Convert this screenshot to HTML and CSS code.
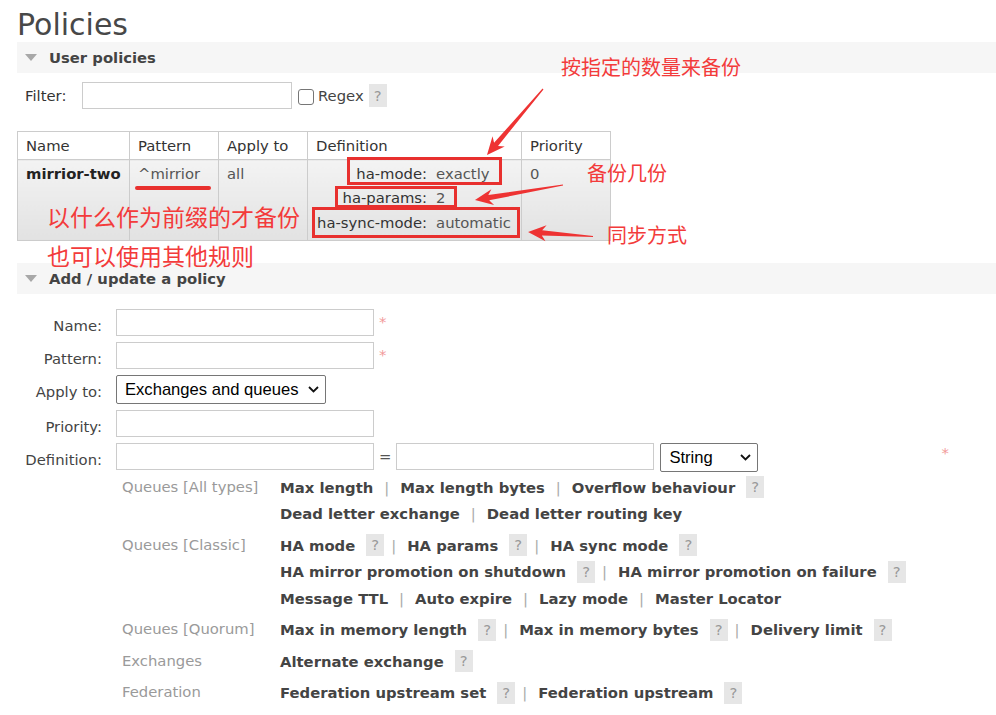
FILE: index.html
```html
<!DOCTYPE html>
<html lang="zh-CN">
<head>
<meta charset="utf-8">
<title>Policies</title>
<link rel="stylesheet" href="styles.css">
</head>
<body>
<div class="page">
  <h1>Policies</h1>

  <section class="section">
    <h2 class="bar"><span class="tri"></span>User policies</h2>
    <div class="filter">
      <span class="filter-label">Filter:</span>
      <input class="text filter-input" type="text">
      <span class="check"></span>
      <span class="regex">Regex</span>
      <span class="help">?</span>
    </div>

    <table class="list">
      <colgroup>
        <col class="c-name"><col class="c-pat"><col class="c-apply"><col class="c-def"><col class="c-pri">
      </colgroup>
      <thead>
        <tr><th>Name</th><th>Pattern</th><th>Apply to</th><th>Definition</th><th>Priority</th></tr>
      </thead>
      <tbody>
        <tr>
          <td class="pname">mirrior-two</td>
          <td>^mirrior</td>
          <td>all</td>
          <td class="def">
            <table class="kv">
              <tr><th>ha-mode:</th><td>exactly</td></tr>
              <tr><th>ha-params:</th><td>2</td></tr>
              <tr class="last"><th>ha-sync-mode:</th><td>automatic</td></tr>
            </table>
          </td>
          <td>0</td>
        </tr>
      </tbody>
    </table>
  </section>

  <section class="section add">
    <h2 class="bar"><span class="tri"></span>Add / update a policy</h2>
    <form class="form">
      <div class="row first">
        <label class="lbl">Name:</label>
        <div class="field"><input class="text w258" type="text"><span class="req">*</span></div>
      </div>
      <div class="row">
        <label class="lbl">Pattern:</label>
        <div class="field"><input class="text w258" type="text"><span class="req">*</span></div>
      </div>
      <div class="row">
        <label class="lbl">Apply to:</label>
        <div class="field">
          <span class="sel sel-apply">
            <select><option>Exchanges and queues</option></select>
            <svg class="chev" width="11" height="7" viewBox="0 0 11 7"><path d="M1 1l4.5 4.5L10 1" fill="none" stroke="#111" stroke-width="1.8"/></svg>
          </span>
        </div>
      </div>
      <div class="row">
        <label class="lbl">Priority:</label>
        <div class="field"><input class="text w258" type="text"></div>
      </div>
      <div class="row">
        <label class="lbl">Definition:</label>
        <div class="field def-field">
          <input class="text w258" type="text">
          <span class="eq">=</span>
          <input class="text w258" type="text">
          <span class="sel sel-type">
            <select><option>String</option></select>
            <svg class="chev" width="11" height="7" viewBox="0 0 11 7"><path d="M1 1l4.5 4.5L10 1" fill="none" stroke="#111" stroke-width="1.8"/></svg>
          </span>
          <span class="req req-def">*</span>
        </div>
      </div>

      <div class="help-area">
        <div class="group">
          <div class="cat">Queues [All types]</div>
          <div class="links">
            <div class="line"><span>Max length</span><span class="sep">|</span><span>Max length bytes</span><span class="sep">|</span><span>Overflow behaviour</span><span class="help">?</span></div>
            <div class="line"><span>Dead letter exchange</span><span class="sep">|</span><span>Dead letter routing key</span></div>
          </div>
        </div>
        <div class="group">
          <div class="cat">Queues [Classic]</div>
          <div class="links">
            <div class="line"><span>HA mode</span><span class="help">?</span><span class="sep">|</span><span>HA params</span><span class="help">?</span><span class="sep">|</span><span>HA sync mode</span><span class="help">?</span></div>
            <div class="line"><span>HA mirror promotion on shutdown</span><span class="help">?</span><span class="sep">|</span><span>HA mirror promotion on failure</span><span class="help">?</span></div>
            <div class="line"><span>Message TTL</span><span class="sep">|</span><span>Auto expire</span><span class="sep">|</span><span>Lazy mode</span><span class="sep">|</span><span>Master Locator</span></div>
          </div>
        </div>
        <div class="group">
          <div class="cat">Queues [Quorum]</div>
          <div class="links">
            <div class="line"><span>Max in memory length</span><span class="help">?</span><span class="sep">|</span><span>Max in memory bytes</span><span class="help">?</span><span class="sep">|</span><span>Delivery limit</span><span class="help">?</span></div>
          </div>
        </div>
        <div class="group">
          <div class="cat">Exchanges</div>
          <div class="links">
            <div class="line"><span>Alternate exchange</span><span class="help">?</span></div>
          </div>
        </div>
        <div class="group">
          <div class="cat">Federation</div>
          <div class="links">
            <div class="line"><span>Federation upstream set</span><span class="help">?</span><span class="sep">|</span><span>Federation upstream</span><span class="help">?</span></div>
          </div>
        </div>
      </div>
    </form>
  </section>

  <div class="annot">
    <div class="box box1"></div>
    <div class="box box2"></div>
    <div class="box box3"></div>
    <div class="uline"></div>
    <div class="note note-big n1">以什么作为前缀的才备份</div>
    <div class="note note-big n2">也可以使用其他规则</div>
    <div class="note n3">按指定的数量来备份</div>
    <div class="note n4">备份几份</div>
    <div class="note n5">同步方式</div>
    <svg class="arrows" width="996" height="715" viewBox="0 0 996 715">
      <polygon transform="translate(543 89) rotate(130.3)" points="0,-0.6 72.6,-2.6 68.6,-8 86.6,0 68.6,8 72.6,2.6 0,0.6"/>
      <polygon transform="translate(563 185) rotate(170.3)" points="0,-0.6 75.3,-2.6 71.3,-8 89.3,0 71.3,8 75.3,2.6 0,0.6"/>
      <polygon transform="translate(593 236.5) rotate(184)" points="0,-0.6 51.1,-2.6 47.1,-8 65.1,0 47.1,8 51.1,2.6 0,0.6"/>
    </svg>
  </div>
</div>
</body>
</html>
```

FILE: styles.css
```css
* { box-sizing: border-box; }

html, body {
  margin: 0;
  padding: 0;
  background: #fff;
}

body {
  font-family: "DejaVu Sans", Verdana, sans-serif;
  font-size: 14.8px;
  color: #484848;
}

.page {
  position: relative;
  width: 996px;
  height: 715px;
  overflow: hidden;
  padding-left: 17px;
}

h1 {
  margin: 8px 0 0 0;
  font-size: 30px;
  line-height: 34px;
  font-weight: normal;
  color: #484848;
}

.bar {
  display: flex;
  align-items: center;
  height: 31px;
  margin: 0;
  padding-left: 8px;
  background: #f6f6f6;
  font-size: 14.8px;
  font-weight: bold;
  color: #444;
}

.tri {
  width: 0;
  height: 0;
  border-left: 6.5px solid transparent;
  border-right: 6.5px solid transparent;
  border-top: 7px solid #a8a8a8;
  margin-right: 12px;
}

/* filter row */
.filter {
  display: flex;
  align-items: center;
  height: 27px;
  margin-top: 9px;
  padding-left: 8px;
}

.filter-label { width: 57px; color: #333; }

input.text {
  height: 27px;
  margin: 0;
  padding: 0 4px;
  border: 1px solid #ccc;
  border-radius: 0;
  background: #fff;
  font: inherit;
  outline: none;
}

.filter-input { width: 210px; }

.check {
  width: 16px;
  height: 16px;
  margin: 2px 0 0 6px;
  border: 1px solid #767676;
  border-radius: 3px;
  background: #fff;
}

.regex { margin-left: 4px; color: #444; }

.help {
  display: inline-block;
  width: 18px;
  height: 23px;
  line-height: 23px;
  margin-left: 5px;
  background: #e6e6e6;
  color: #999;
  text-align: center;
  font-weight: normal;
}

/* policy list */
.list {
  margin-top: 22px;
  border-collapse: collapse;
  table-layout: fixed;
  width: 593px;
}

.c-name { width: 112px; }
.c-pat { width: 89px; }
.c-apply { width: 89px; }
.c-def { width: 214px; }
.c-pri { width: 89px; }

.list > thead > tr > th,
.list > tbody > tr > td {
  border: 1px solid #ccc;
  padding: 5px 8px;
  text-align: left;
  vertical-align: top;
  white-space: nowrap;
}

.list > thead > tr > th {
  font-weight: normal;
  color: #333;
  background: #fff;
}

.list > tbody > tr > td {
  color: #555;
  background: linear-gradient(#f3f3f3, #e2e2e2);
}

.list > tbody > tr > td.pname {
  font-weight: bold;
  color: #222;
}

.kv {
  border-collapse: collapse;
  margin-left: 1px;
}

.kv th,
.kv td {
  padding: 0 0 7.4px 0;
  vertical-align: top;
  white-space: nowrap;
}

.kv .last th,
.kv .last td { padding-bottom: 4px; }

.kv th {
  font-weight: normal;
  text-align: right;
  color: #333;
  padding-right: 3px;
}

.kv td {
  color: #555;
  padding-left: 6px;
}

/* add form */
.add { margin-top: 22px; }

.form { margin-top: 15px; }

.row {
  display: flex;
  align-items: flex-start;
}

.row + .row { margin-top: 6px; }
.row.first { margin-bottom: 2px; }

.lbl {
  width: 85px;
  padding-top: 8.5px;
  text-align: right;
  color: #444;
  flex: none;
}

.field {
  display: flex;
  align-items: flex-start;
  margin-left: 14px;
}

.w258 { width: 258px; }

.req {
  margin-left: 5px;
  line-height: 26px;
  color: #f29a9a;
}

.def-field { width: 833px; }

.req-def {
  margin-left: auto;
  line-height: 20px;
}

.eq {
  margin: 0 5px;
  line-height: 27px;
  color: #555;
}

.sel {
  position: relative;
  display: inline-block;
}

.sel select {
  appearance: none;
  -webkit-appearance: none;
  height: 29px;
  margin: 0;
  padding: 0 0 0 8px;
  border: 1px solid #767676;
  border-radius: 2px;
  background: #fff;
  color: #000;
  font-family: "Liberation Sans", Arial, sans-serif;
  font-size: 16.6px;
  outline: none;
}

.sel-apply select { width: 210px; }
.sel-type { margin-left: 6px; }
.sel-type select { width: 98px; }

.chev {
  position: absolute;
  right: 7px;
  top: 11px;
}

/* help area */
.help-area {
  margin: 2px 0 0 105px;
}

.group {
  display: flex;
  margin-bottom: 5px;
}

.cat {
  width: 158px;
  flex: none;
  line-height: 25px;
  color: #9a9a9a;
}

.links {
  font-weight: bold;
  color: #444;
}

.line {
  display: flex;
  align-items: center;
  height: 26.5px;
  white-space: nowrap;
}

.line .help {
  height: 22px;
  line-height: 22px;
  margin-left: 11px;
}

.sep {
  margin: 0 11px;
  font-weight: normal;
  color: #aaa;
}

.help + .sep { margin-left: 7px; }

/* annotations */
.annot {
  position: absolute;
  left: 0;
  top: 0;
  width: 996px;
  height: 715px;
  pointer-events: none;
}

.box {
  position: absolute;
  border: 3px solid #e8302e;
}

.box1 { left: 347px; top: 157px; width: 155px; height: 28px; }
.box2 { left: 335px; top: 186px; width: 122px; height: 22px; }
.box3 { left: 312px; top: 207px; width: 208px; height: 31px; }

.uline {
  position: absolute;
  left: 135px;
  top: 186px;
  width: 76px;
  height: 4px;
  border-radius: 2px;
  background: #e8302e;
}

.note {
  position: absolute;
  font-family: "Noto Sans CJK SC", sans-serif;
  font-size: 20px;
  line-height: 1;
  color: #f33b3b;
  white-space: nowrap;
}

.note-big { font-size: 23px; }

.n1 { left: 47px; top: 205px; }
.n2 { left: 47px; top: 244px; }
.n3 { left: 561px; top: 57px; }
.n4 { left: 587px; top: 163px; }
.n5 { left: 607px; top: 225px; }

.arrows {
  position: absolute;
  left: 0;
  top: 0;
}

.arrows polygon { fill: #ee3333; }
```
